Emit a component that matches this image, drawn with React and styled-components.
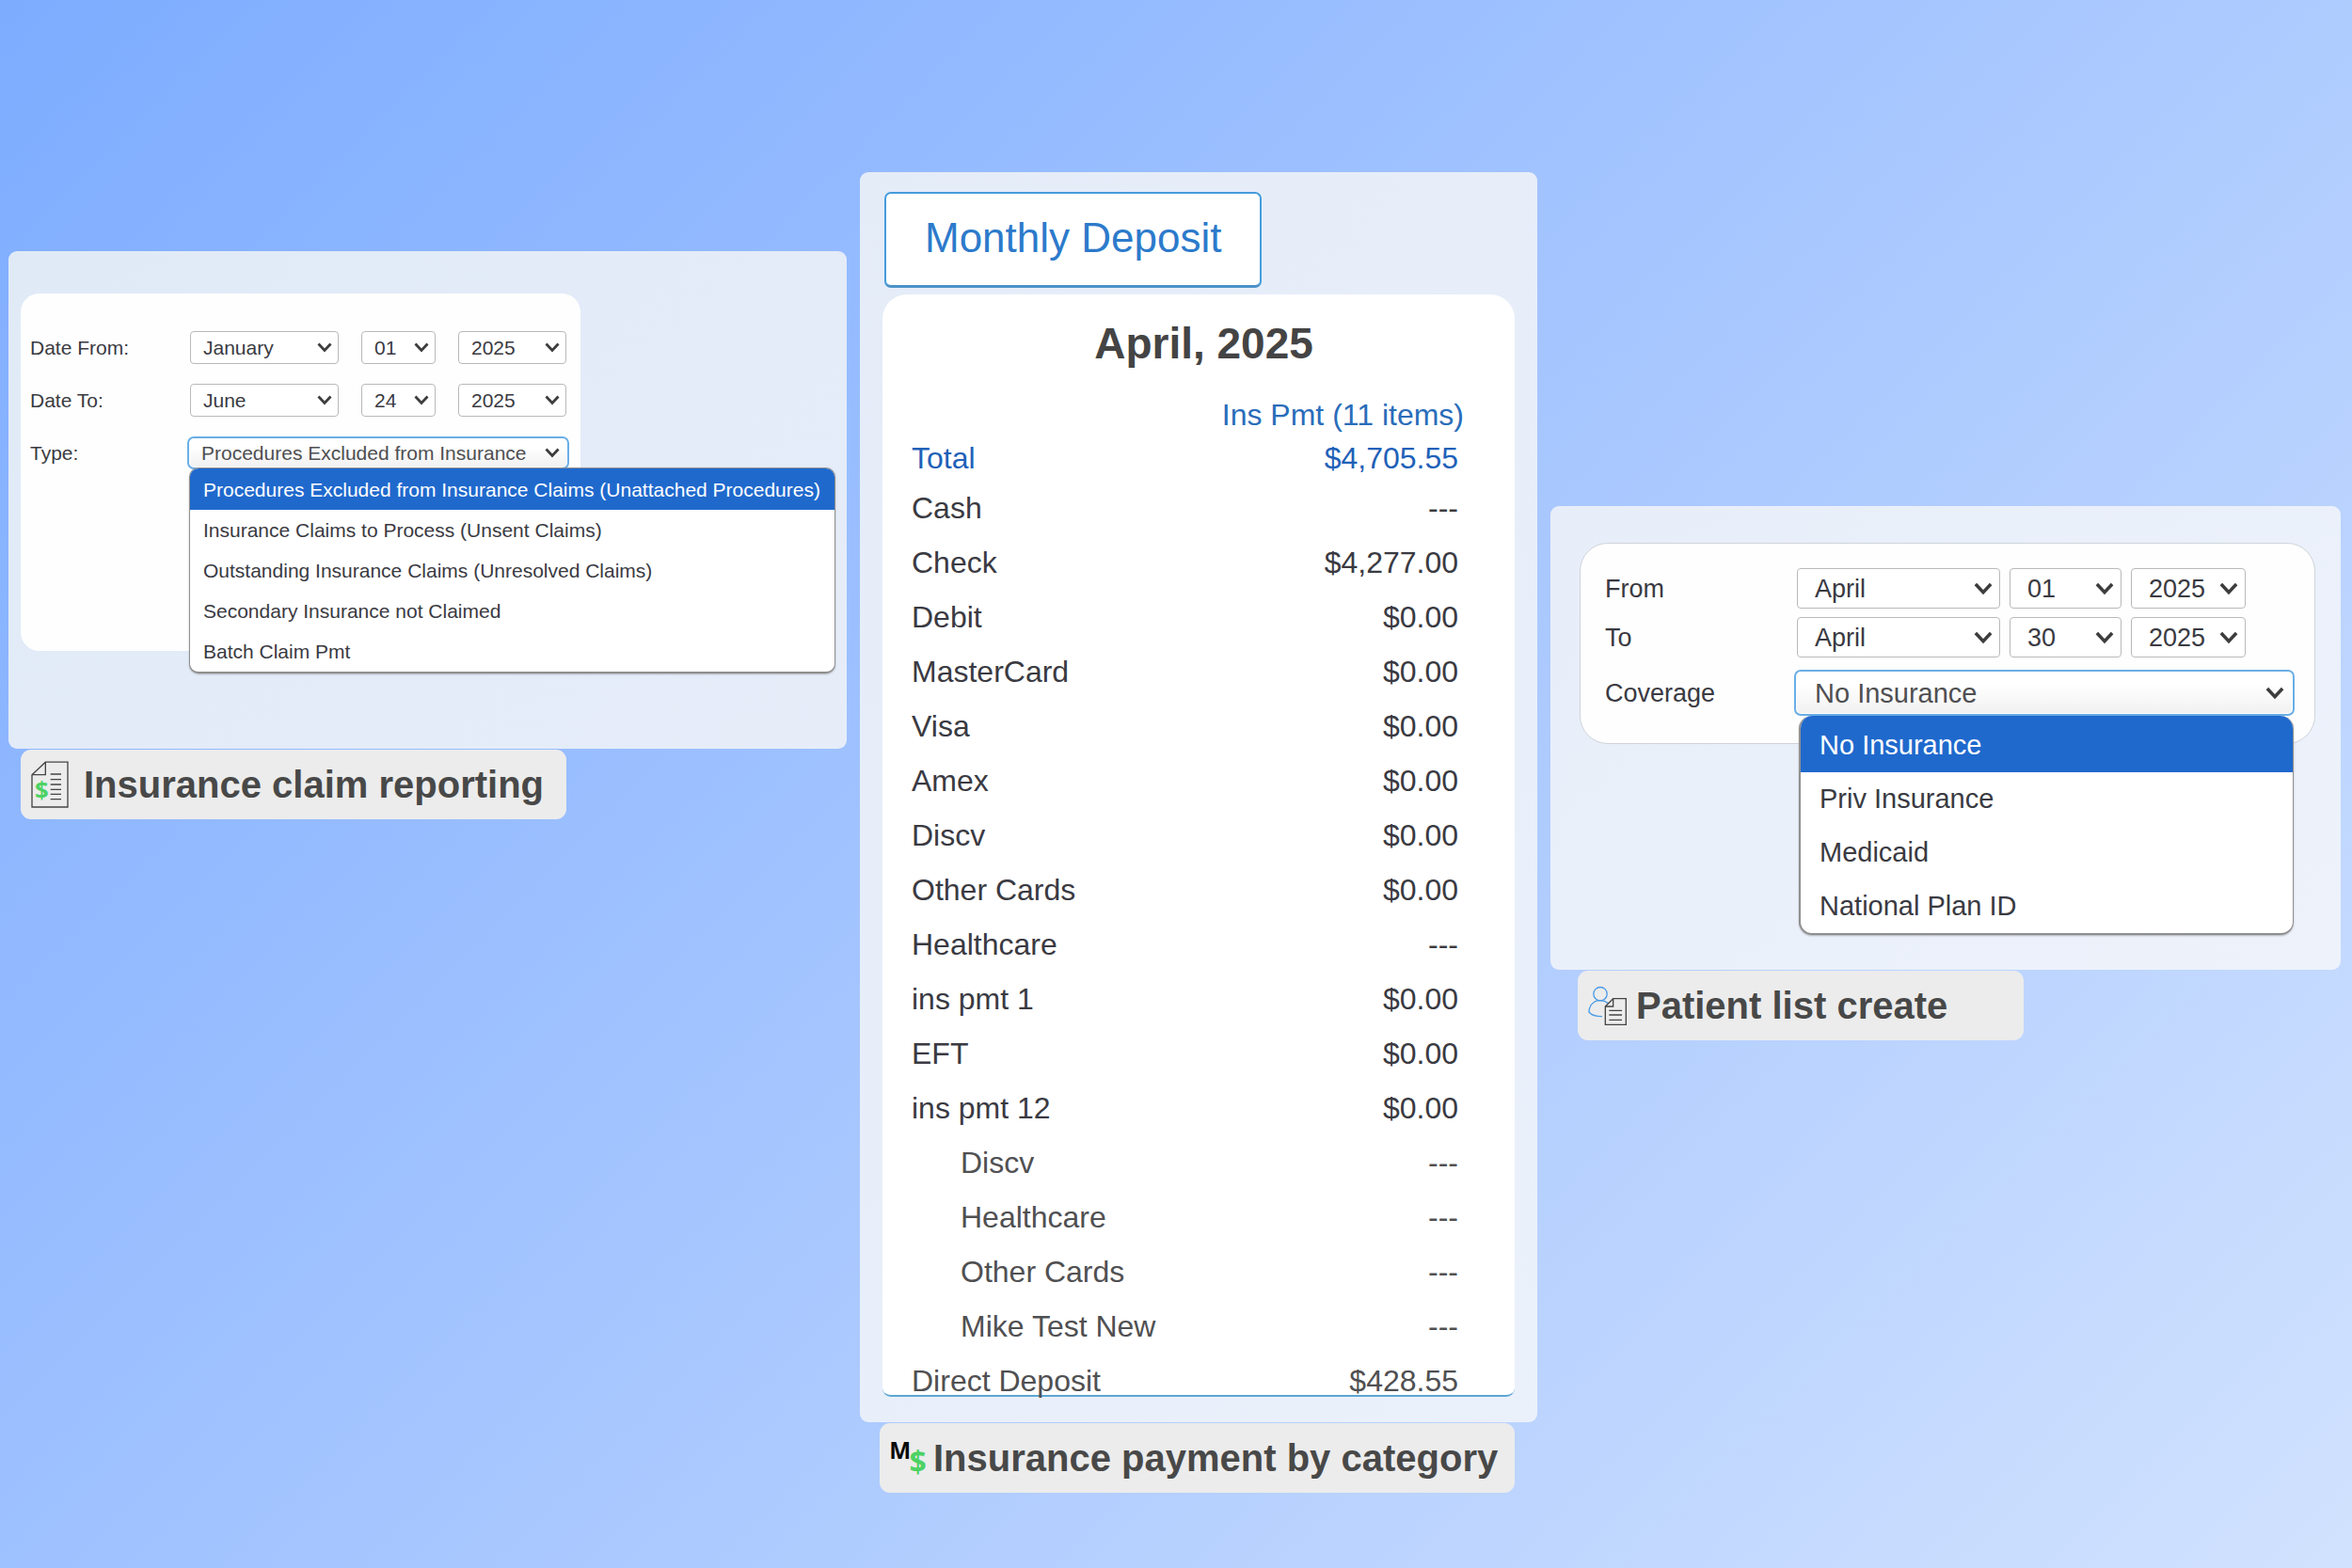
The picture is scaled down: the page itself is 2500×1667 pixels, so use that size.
import React from "react";
import styled, { createGlobalStyle, css } from "styled-components";

const GlobalStyle = createGlobalStyle`
  *, *::before, *::after { box-sizing: border-box; }
  body {
    margin: 0;
    font-family: "Liberation Sans", Arial, Helvetica, sans-serif;
    color: #3a3a42;
  }
`;

const Page = styled.main`
  min-height: 100vh;
  display: grid;
  grid-template-columns: 891fr 720fr 840fr;
  align-items: start;
  gap: 14px;
  padding: 0 12px 0 9px;
  background: linear-gradient(135deg, #7dacff 0%, #a6c6ff 50%, #d1e2fe 100%);
`;

const Feature = styled.section`
  display: flex;
  flex-direction: column;
  gap: 1px;
  min-width: 0;
  padding-top: ${(p) => p.$top}px;
`;

const Panel = styled.div`
  padding: ${(p) => p.$pad};
  border-radius: 9px;
  background: ${(p) => p.$tint};
`;

const Caption = styled.h2`
  display: flex;
  align-items: center;
  align-self: flex-start;
  gap: ${(p) => p.$gap}px;
  min-width: ${(p) => p.$width}px;
  height: 74px;
  margin: 0 0 0 ${(p) => p.$indent}px;
  padding: 0 11px;
  border-radius: 11px;
  background: #ececec;
  color: #484848;
  font-size: 40px;
  line-height: 48px;
  font-weight: 700;
  white-space: nowrap;

  svg { flex: none; overflow: visible; }
`;

/* Filter forms */

const FilterCard = styled.form`
  display: flex;
  flex-direction: column;
  gap: ${(p) => (p.$large ? 9 : 21)}px;
  max-width: ${(p) => (p.$large ? 782 : 595)}px;
  padding: ${(p) => (p.$large ? "26px 24px 32px 26px" : "40px 15px 193px 10px")};
  border: ${(p) => (p.$large ? "1px solid #cfd3da" : "0")};
  border-radius: ${(p) => (p.$large ? 30 : 20)}px;
  background: #fefefe;
  font-size: ${(p) => (p.$large ? 27 : 21)}px;
`;

const Field = styled.div`
  display: grid;
  grid-template-columns: ${(p) => (p.$large ? "204px 1fr" : "170px 1fr")};
  align-items: center;
  min-height: ${(p) => (p.$large ? 43 : 35)}px;
  padding-top: ${(p) => (p.$spaced ? 7 : 0)}px;
`;

const FieldLabel = styled.label`
  line-height: 32px;
`;

const DateParts = styled.div`
  display: grid;
  grid-template-columns: ${(p) => (p.$large ? "216px 119px 122px" : "158px 79px 115px")};
  gap: ${(p) => (p.$large ? 10 : 24)}px;
`;

const SelectBox = styled.div`
  position: relative;
  display: flex;

  > svg {
    position: absolute;
    right: ${(p) => (p.$large ? 8 : 7)}px;
    top: 0;
    bottom: 0;
    margin: auto 0;
    pointer-events: none;
  }
`;

const Select = styled.select`
  appearance: none;
  width: 100%;
  height: ${(p) => (p.$large ? 43 : 35)}px;
  margin: 0;
  padding: 0 0 0 ${(p) => (p.$large ? 18 : 13)}px;
  border: 1px solid #b9b9b9;
  border-radius: 4px;
  background: #fff;
  color: inherit;
  font: inherit;
  ${(p) =>
    p.$open &&
    css`
      height: ${p.$large ? 43 : 29}px;
      padding-left: ${p.$large ? 19 : 12}px;
      border: 0;
      outline: 2px solid #6aaee6;
      outline-offset: 1px;
      background: linear-gradient(#fff 30%, #f1f1f1);
      color: #4f4f52;
      font-size: ${p.$large ? 29 : 21}px;
    `}
`;

const Menu = styled.ul`
  position: absolute;
  z-index: 1;
  top: ${(p) => (p.$large ? "calc(100% + 3px)" : "calc(100% + 1px)")};
  left: ${(p) => (p.$large ? 2 : -1)}px;
  min-width: ${(p) => (p.$large ? "100%" : "687px")};
  margin: 0;
  padding: 0;
  overflow: hidden;
  list-style: none;
  border: 1px solid #8f8f8f;
  border-width: ${(p) => (p.$large ? "0 1px 2px 2px" : "1px 1px 2px")};
  border-radius: ${(p) => (p.$large ? 14 : 10)}px;
  background: #fff;
  box-shadow: 0 1px 2px rgba(0, 0, 0, 0.25);
  font-size: ${(p) => (p.$large ? 29 : 21)}px;
  line-height: ${(p) => (p.$large ? 57 : 43)}px;
  white-space: nowrap;
`;

const MenuItem = styled.li`
  padding-left: ${(p) => (p.$large ? 20 : 14)}px;
  ${(p) =>
    p["aria-selected"] &&
    css`
      padding-top: ${p.$large ? 3 : 1}px;
      background: #1f69cd;
      color: #fff;
    `}
`;

/* Deposit report */

const TabButton = styled.button`
  display: block;
  margin: 0 2px 7px;
  padding: 22px 41px 25px;
  border: 2px solid #459cdc;
  border-bottom: 3px solid #4b92c8;
  border-radius: 7px;
  background: #fff;
  color: #2c7acb;
  font: 44px/50px "Liberation Sans", Arial, Helvetica, sans-serif;
  white-space: nowrap;
`;

const Report = styled.div`
  padding: 27px 20px 0 31px;
  border-bottom: 2px solid #5ba6d2;
  border-radius: 26px 26px 9px 9px;
  background: #fff;
`;

const ReportTitle = styled.h1`
  margin: 0 0 28px;
  color: #444;
  font-size: 46px;
  line-height: 50px;
  text-align: center;
`;

const Table = styled.table`
  width: 100%;
  border-collapse: collapse;
  font-size: 32px;
  line-height: 28px;

  th, td { padding: 15px 0; font-weight: 400; text-align: left; }
  tbody tr:last-child > * { padding-bottom: 1px; }
`;

const HeadRow = styled.tr`
  color: #2a6dba;

  && > * { padding: 9px 0; }
  && > th:last-child { padding-right: 34px; text-align: right; }
`;

const TotalRow = styled.tr`
  color: #1f61b8;

  && > * { padding-top: 9px; padding-bottom: 10px; }
`;

const Row = styled.tr`
  color: ${(p) => (p.$muted ? "#505052" : "#3a3a42")};

  && > th { padding-left: ${(p) => (p.$nested ? 52 : 0)}px; }
`;

const Amount = styled.td`
  && { padding-right: 40px; text-align: right; }
`;

/* Icons */

function Chevron({ large }) {
  return (
    <svg width={large ? 20 : 16} height={large ? 14 : 11} viewBox="0 0 16 11" fill="none" aria-hidden="true">
      <path d="M1.500 1.500L8 8.500L14.500 1.500" stroke="#3d3d3d" strokeWidth="2.800" />
    </svg>
  );
}

const iconFont = { fontFamily: '"Open Sans", "Noto Sans", sans-serif', fontWeight: 700 };

function ClaimIcon() {
  return (
    <svg width="40" height="50" viewBox="46 40 120 150" fill="none" aria-hidden="true">
      <path d="M49 84L92 43.500H163V187H49zM92 43.500V84H49" stroke="#444" strokeWidth="4" />
      <path d="M108 82h34M108 99h34M108 115h34M108 131h34M108 146h34M108 162h34" stroke="#444" strokeWidth="4" />
      <text x="80" y="161" textAnchor="middle" fontSize="77" fill="#4cd264" {...iconFont}>$</text>
    </svg>
  );
}

function MoneyIcon() {
  return (
    <svg width="38" height="40" viewBox="49 45 114 120" aria-hidden="true">
      <text x="81" y="107" textAnchor="middle" fontSize="73" fill="#0a0a0a" {...iconFont}>M</text>
      <text x="138" y="153" textAnchor="middle" fontSize="96" fill="#4cd264" {...iconFont}>$</text>
    </svg>
  );
}

function PatientIcon() {
  return (
    <svg width="41" height="43" viewBox="37 39 123 129" fill="none" strokeWidth="4" aria-hidden="true">
      <circle cx="76" cy="65" r="21.500" stroke="#4a9be6" />
      <path d="M100 94C86 84 68 84 58 90C44 99 40 110 40 123C48 133 60 137 82 137" stroke="#4a9be6" />
      <path d="M92 105L117 80H158V163H92zM117 80V105H92M104 118h41M104 132h41M104 148h41" stroke="#444" />
    </svg>
  );
}

/* Composite parts */

function Picker({ id, label, value, large, open, children }) {
  return (
    <SelectBox $large={large}>
      <Select id={id} aria-label={label} defaultValue={value} $large={large} $open={open}>
        <option>{value}</option>
      </Select>
      <Chevron large={large} />
      {children}
    </SelectBox>
  );
}

function DateField({ id, label, value, large }) {
  const [month, day, year] = value;
  return (
    <Field $large={large}>
      <FieldLabel htmlFor={id}>{label}</FieldLabel>
      <DateParts $large={large}>
        <Picker id={id} value={month} large={large} />
        <Picker label={`${label} day`} value={day} large={large} />
        <Picker label={`${label} year`} value={year} large={large} />
      </DateParts>
    </Field>
  );
}

function MenuField({ id, label, value, options, large }) {
  return (
    <Field $large={large} $spaced={large}>
      <FieldLabel htmlFor={id}>{label}</FieldLabel>
      <Picker id={id} value={value} large={large} open>
        <Menu role="listbox" aria-label={label} $large={large}>
          {options.map((option, i) => (
            <MenuItem key={option} role="option" aria-selected={i === 0} $large={large}>
              {option}
            </MenuItem>
          ))}
        </Menu>
      </Picker>
    </Field>
  );
}

const claimTypes = [
  "Procedures Excluded from Insurance Claims (Unattached Procedures)",
  "Insurance Claims to Process (Unsent Claims)",
  "Outstanding Insurance Claims (Unresolved Claims)",
  "Secondary Insurance not Claimed",
  "Batch Claim Pmt",
];

const coverages = ["No Insurance", "Priv Insurance", "Medicaid", "National Plan ID"];

const deposits = [
  { name: "Cash", amount: "---" },
  { name: "Check", amount: "$4,277.00" },
  { name: "Debit", amount: "$0.00" },
  { name: "MasterCard", amount: "$0.00" },
  { name: "Visa", amount: "$0.00" },
  { name: "Amex", amount: "$0.00" },
  { name: "Discv", amount: "$0.00" },
  { name: "Other Cards", amount: "$0.00" },
  { name: "Healthcare", amount: "---" },
  { name: "ins pmt 1", amount: "$0.00" },
  { name: "EFT", amount: "$0.00" },
  { name: "ins pmt 12", amount: "$0.00" },
  { name: "Discv", amount: "---", nested: true, muted: true },
  { name: "Healthcare", amount: "---", nested: true, muted: true },
  { name: "Other Cards", amount: "---", nested: true, muted: true },
  { name: "Mike Test New", amount: "---", nested: true, muted: true },
  { name: "Direct Deposit", amount: "$428.55", muted: true },
];

export default function App() {
  return (
    <>
      <GlobalStyle />
      <Page>
        <Feature $top={267}>
          <Panel $pad="45px 13px 104px" $tint="linear-gradient(135deg, #e0eaf7, #e6edf9)">
            <FilterCard>
              <DateField id="claim-from" label="Date From:" value={["January", "01", "2025"]} />
              <DateField id="claim-to" label="Date To:" value={["June", "24", "2025"]} />
              <MenuField
                id="claim-type"
                label="Type:"
                value="Procedures Excluded from Insurance"
                options={claimTypes}
              />
            </FilterCard>
          </Panel>
          <Caption $indent={13} $gap={16} $width={580}>
            <ClaimIcon />
            Insurance claim reporting
          </Caption>
        </Feature>

        <Feature $top={183}>
          <Panel $pad="21px 24px 27px" $tint="linear-gradient(135deg, #e4ecf8, #ebf1fb)">
            <TabButton type="button">Monthly Deposit</TabButton>
            <Report>
              <ReportTitle>April, 2025</ReportTitle>
              <Table>
                <thead>
                  <HeadRow>
                    <td />
                    <th scope="col">Ins Pmt (11 items)</th>
                  </HeadRow>
                </thead>
                <tbody>
                  <TotalRow>
                    <th scope="row">Total</th>
                    <Amount>$4,705.55</Amount>
                  </TotalRow>
                  {deposits.map((d, i) => (
                    <Row key={i} $nested={d.nested} $muted={d.muted}>
                      <th scope="row">{d.name}</th>
                      <Amount>{d.amount}</Amount>
                    </Row>
                  ))}
                </tbody>
              </Table>
            </Report>
          </Panel>
          <Caption $indent={21} $gap={8} $width={675}>
            <MoneyIcon />
            Insurance payment by category
          </Caption>
        </Feature>

        <Feature $top={538}>
          <Panel $pad="39px 27px 240px 31px" $tint="linear-gradient(135deg, #e8eef9, #edf2fb)">
            <FilterCard $large>
              <DateField id="list-from" label="From" value={["April", "01", "2025"]} large />
              <DateField id="list-to" label="To" value={["April", "30", "2025"]} large />
              <MenuField id="list-coverage" label="Coverage" value="No Insurance" options={coverages} large />
            </FilterCard>
          </Panel>
          <Caption $indent={29} $gap={10} $width={474}>
            <PatientIcon />
            Patient list create
          </Caption>
        </Feature>
      </Page>
    </>
  );
}
